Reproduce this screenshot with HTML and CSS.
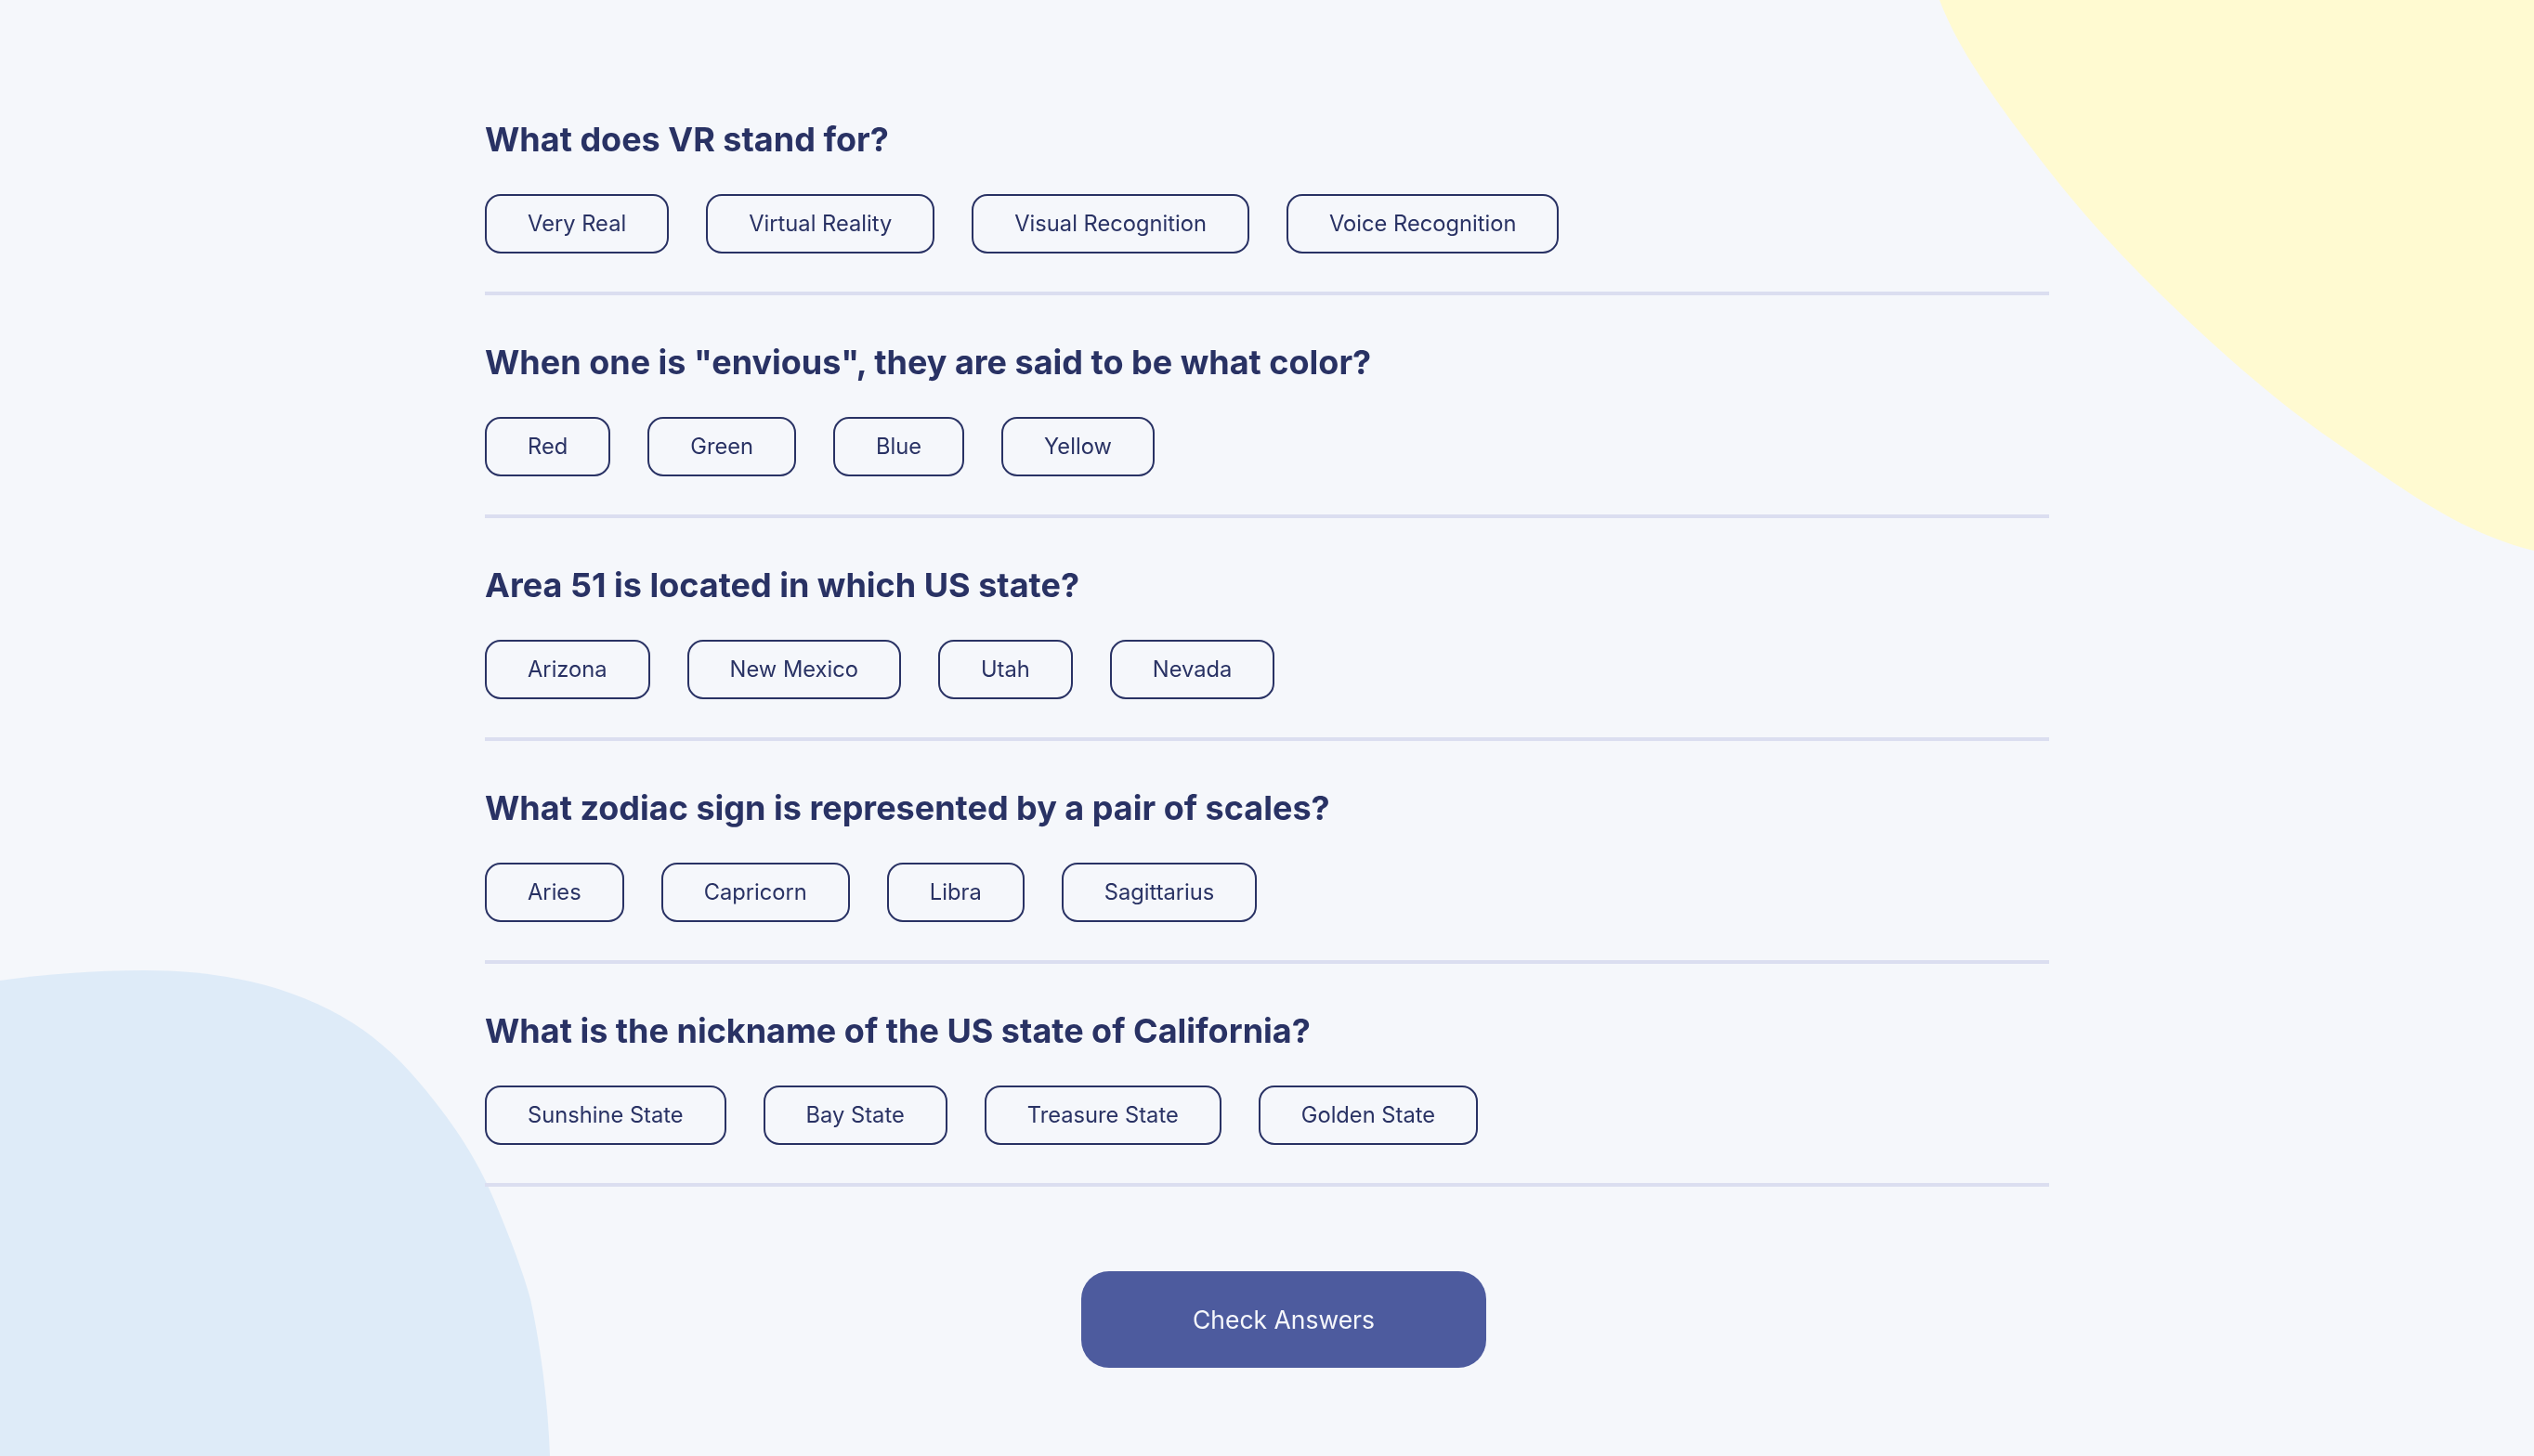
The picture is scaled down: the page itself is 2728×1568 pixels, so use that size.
FILE: index.html
```html
<!DOCTYPE html>
<html lang="en">
<head>
<meta charset="utf-8">
<title>Quizzical</title>
<link rel="stylesheet" href="styles.css">
</head>
<body>
<svg class="blobs" viewBox="0 0 2728 1568" preserveAspectRatio="none" aria-hidden="true">
  <path class="blob-yellow" d="M2088,0 C2108,53 2146.5,105.3 2186,158 C2225.5,210.7 2270.8,263.3 2325,316 C2379.2,368.7 2443.8,427.8 2511,474 C2578.2,520.2 2644.7,573 2728,593 L2728,0 Z"/>
  <path class="blob-blue" d="M0,1056 C50,1049 100,1045 155,1045 C240,1045 310,1062 367,1094 C400,1113 425,1135 449,1163 C485,1205 512,1245 531,1290 C550,1335 563,1370 571,1399 C582,1450 590,1510 592,1568 L0,1568 Z"/>
</svg>
<main class="quiz">
  <section class="question">
    <h2 class="question-title">What does VR stand for?</h2>
    <div class="answers">
      <button class="answer">Very Real</button>
      <button class="answer">Virtual Reality</button>
      <button class="answer">Visual Recognition</button>
      <button class="answer">Voice Recognition</button>
    </div>
  </section>
  <section class="question">
    <h2 class="question-title">When one is "envious", they are said to be what color?</h2>
    <div class="answers">
      <button class="answer">Red</button>
      <button class="answer">Green</button>
      <button class="answer">Blue</button>
      <button class="answer">Yellow</button>
    </div>
  </section>
  <section class="question">
    <h2 class="question-title">Area 51 is located in which US state?</h2>
    <div class="answers">
      <button class="answer">Arizona</button>
      <button class="answer">New Mexico</button>
      <button class="answer">Utah</button>
      <button class="answer">Nevada</button>
    </div>
  </section>
  <section class="question">
    <h2 class="question-title">What zodiac sign is represented by a pair of scales?</h2>
    <div class="answers">
      <button class="answer">Aries</button>
      <button class="answer">Capricorn</button>
      <button class="answer">Libra</button>
      <button class="answer">Sagittarius</button>
    </div>
  </section>
  <section class="question">
    <h2 class="question-title">What is the nickname of the US state of California?</h2>
    <div class="answers">
      <button class="answer">Sunshine State</button>
      <button class="answer">Bay State</button>
      <button class="answer">Treasure State</button>
      <button class="answer">Golden State</button>
    </div>
  </section>
  <div class="actions">
    <button class="check-btn">Check Answers</button>
  </div>
</main>
</body>
</html>
```
FILE: styles.css
```css
* { box-sizing: border-box; }

html, body {
  margin: 0;
  padding: 0;
}

body {
  background: #F5F7FB;
  min-height: 100vh;
  overflow: hidden;
  font-family: "Inter", "Liberation Sans", sans-serif;
  color: #293264;
}

.blobs {
  position: fixed;
  inset: 0;
  width: 100%;
  height: 100%;
  z-index: 0;
}

.blob-yellow { fill: #FFFAD1; }
.blob-blue { fill: #DEEBF8; }

.quiz {
  position: relative;
  z-index: 1;
  width: 1684px;
  margin: 0 auto;
  padding-top: 78px;
}

.question {
  padding-top: 50px;
  padding-bottom: 41px;
  border-bottom: 4px solid #DBDEF0;
}

.question-title {
  margin: 0;
  font-family: "Inter", "Liberation Sans", sans-serif;
  font-weight: 700;
  font-size: 36px;
  line-height: 44px;
  color: #293264;
}

.answers {
  display: flex;
  gap: 40px;
  margin-top: 37px;
}

.answer {
  font-family: "Inter", "Liberation Sans", sans-serif;
  font-size: 23.7px;
  line-height: 32px;
  font-weight: 400;
  color: #293264;
  background: transparent;
  border: 2px solid #293264;
  border-radius: 17px;
  padding: 14px 44px;
  cursor: pointer;
}

.actions {
  display: flex;
  justify-content: center;
  padding-left: 36px;
  margin-top: 91px;
}

.check-btn {
  width: 436px;
  height: 104px;
  border: none;
  border-radius: 30px;
  background: #4D5B9E;
  color: #F5F7FB;
  font-family: "Inter", "Liberation Sans", sans-serif;
  font-size: 26.5px;
  font-weight: 400;
  cursor: pointer;
}
```
